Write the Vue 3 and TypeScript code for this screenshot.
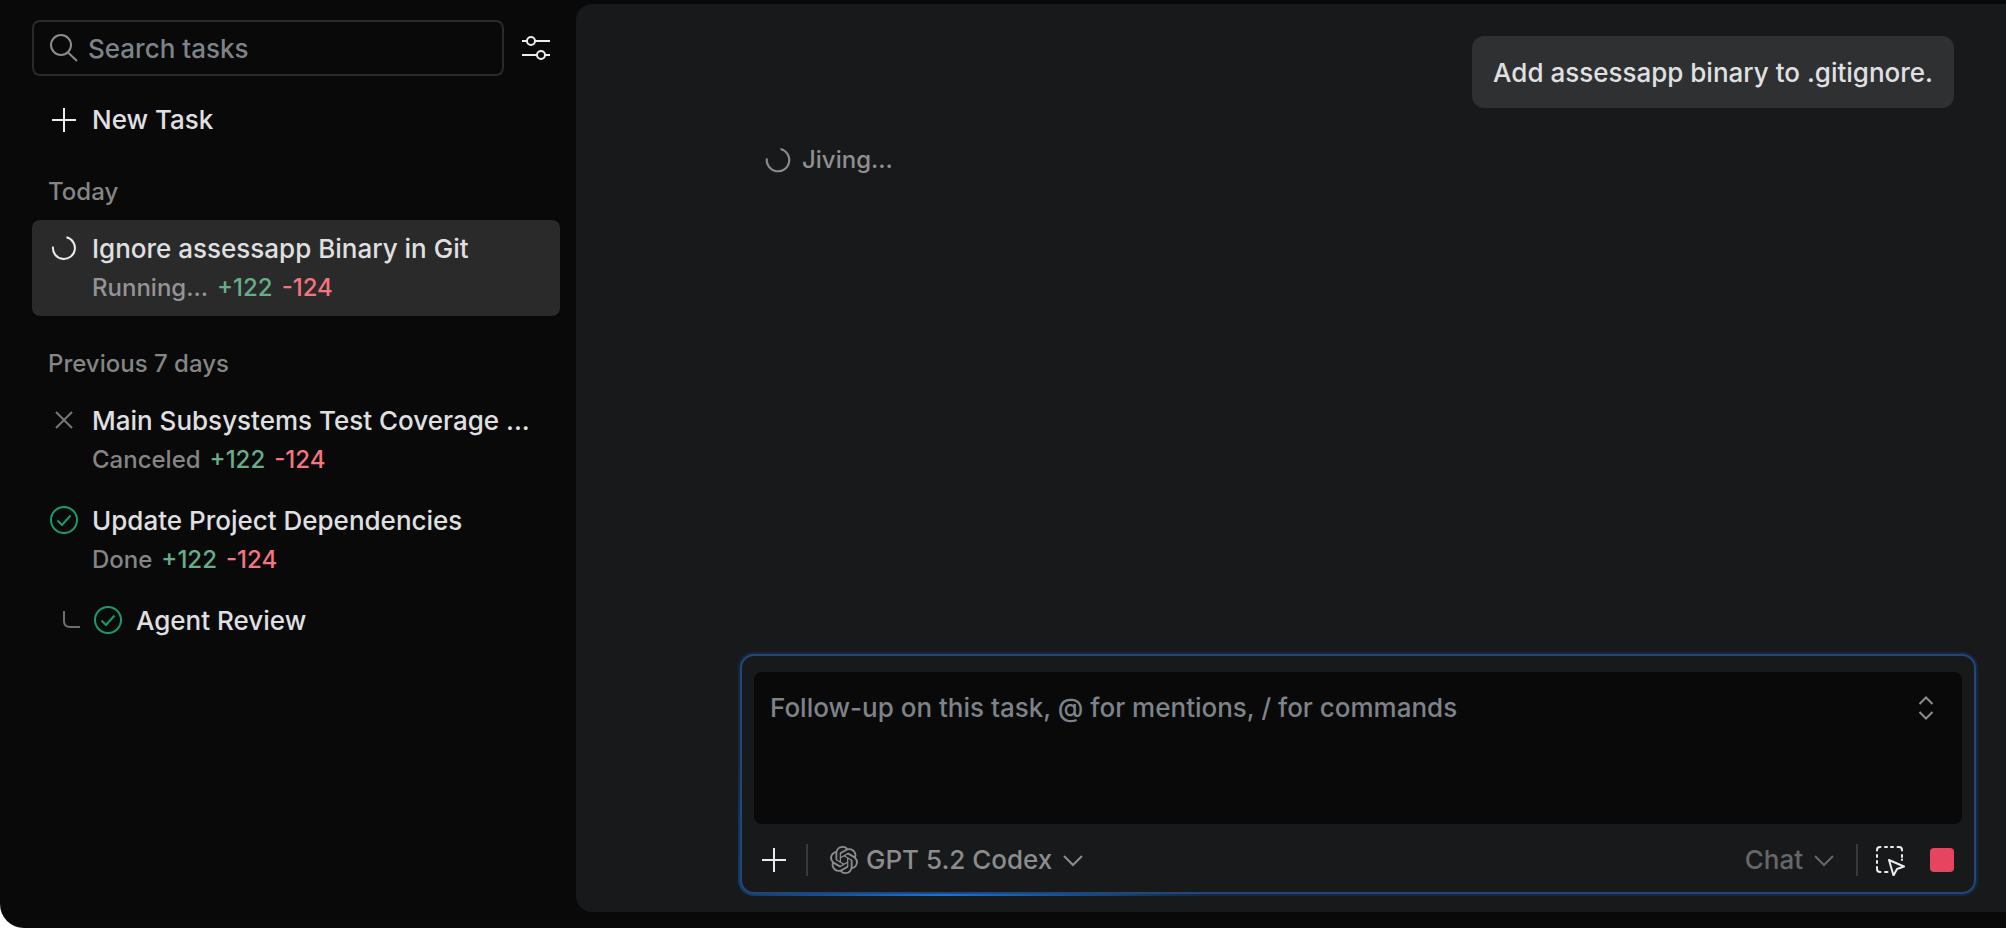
<script setup lang="ts">
import { ref } from 'vue'

type Status = 'running' | 'canceled' | 'done'

interface Task {
  id: number
  title: string
  status: Status
  label?: string
  added?: number
  removed?: number
  child?: boolean
}

interface Group {
  heading: string
  tasks: Task[]
}

const groups: Group[] = [
  {
    heading: 'Today',
    tasks: [
      { id: 1, title: 'Ignore assessapp Binary in Git', status: 'running', label: 'Running...', added: 122, removed: 124 },
    ],
  },
  {
    heading: 'Previous 7 days',
    tasks: [
      { id: 2, title: 'Main Subsystems Test Coverage ...', status: 'canceled', label: 'Canceled', added: 122, removed: 124 },
      { id: 3, title: 'Update Project Dependencies', status: 'done', label: 'Done', added: 122, removed: 124 },
      { id: 4, title: 'Agent Review', status: 'done', child: true },
    ],
  },
]

const selected = ref(1)
const query = ref('')
const draft = ref('')
const model = ref('GPT 5.2 Codex')
const mode = ref('Chat')
</script>

<template>
  <div class="window">
    <aside class="sidebar">
      <div class="search-row">
        <label class="search">
          <svg class="icon" viewBox="0 0 28 28" aria-hidden="true">
            <circle cx="11" cy="11" r="10" />
            <path d="M18 18.5 27 27" />
          </svg>
          <input v-model="query" type="text" placeholder="Search tasks" aria-label="Search tasks" />
        </label>
        <button class="icon-button" type="button" aria-label="Filter tasks">
          <svg class="icon bright" viewBox="0 0 28 28" aria-hidden="true">
            <path d="M0 7h5M13 7h15M0 21h15M23 21h5" />
            <circle cx="9" cy="7" r="4" />
            <circle cx="19" cy="21" r="4" />
          </svg>
        </button>
      </div>

      <button class="new-task" type="button">
        <svg class="icon bright" viewBox="0 0 28 28" aria-hidden="true">
          <path d="M14 2v24M2 14h24" />
        </svg>
        New Task
      </button>

      <section v-for="group in groups" :key="group.heading" class="group">
        <h2>{{ group.heading }}</h2>
        <ul>
          <li v-for="task in group.tasks" :key="task.id">
            <button
              class="task"
              :class="{ selected: selected === task.id, child: task.child }"
              type="button"
              @click="selected = task.id"
            >
              <svg v-if="task.child" class="branch" viewBox="0 0 18 28" aria-hidden="true">
                <path d="M2 5v10q0 6 6 6h10" />
              </svg>
              <svg v-if="task.status === 'running'" class="icon bright" viewBox="0 0 28 28" aria-hidden="true">
                <path d="M16.5 3.3A11 11 0 1 1 3 12.6" />
              </svg>
              <svg v-else-if="task.status === 'canceled'" class="icon dim" viewBox="0 0 28 28" aria-hidden="true">
                <path d="M6 6l16 16M22 6 6 22" />
              </svg>
              <svg v-else class="icon green" viewBox="0 0 28 28" aria-hidden="true">
                <circle cx="14" cy="14" r="13" />
                <path d="M7.5 14.5 12 19l8.500-9.500" />
              </svg>
              <span class="text">
                <span class="title">{{ task.title }}</span>
                <span v-if="task.label" class="meta">
                  <span>{{ task.label }}</span>
                  <span class="added">+{{ task.added }}</span>
                  <span class="removed">-{{ task.removed }}</span>
                </span>
              </span>
            </button>
          </li>
        </ul>
      </section>
    </aside>

    <main class="panel">
      <div class="thread">
        <p class="bubble">Add assessapp binary to .gitignore.</p>
        <p class="progress" role="status">
          <svg class="icon" viewBox="0 0 28 28" aria-hidden="true">
            <path d="M16.5 3A11.300 11.300 0 1 1 2.800 12.400" />
          </svg>
          Jiving...
        </p>
      </div>

      <form class="composer" @submit.prevent>
        <div class="composer-body">
          <div class="field">
            <textarea
              v-model="draft"
              placeholder="Follow-up on this task, @ for mentions, / for commands"
              aria-label="Follow-up"
            ></textarea>
            <button class="icon-button" type="button" aria-label="Expand editor">
              <svg class="icon" viewBox="0 0 28 28" aria-hidden="true">
                <path d="m7.500 10 6.500-6.500 6.500 6.500M7.500 18l6.500 6.500 6.500-6.500" />
              </svg>
            </button>
          </div>

          <div class="toolbar">
            <button class="icon-button" type="button" aria-label="Add context">
              <svg class="icon bright" viewBox="0 0 28 28" aria-hidden="true">
                <path d="M14 2v24M2 14h24" />
              </svg>
            </button>
            <span class="divider"></span>
            <label class="picker">
              <svg class="logo" viewBox="0 0 24 24" aria-hidden="true">
                <path d="M22.282 9.821a5.985 5.985 0 0 0-.516-4.910 6.046 6.046 0 0 0-6.510-2.900A6.065 6.065 0 0 0 4.981 4.182a5.985 5.985 0 0 0-3.998 2.900 6.046 6.046 0 0 0 .743 7.097 5.980 5.980 0 0 0 .511 4.911 6.051 6.051 0 0 0 6.515 2.900A5.985 5.985 0 0 0 13.260 24a6.056 6.056 0 0 0 5.772-4.206 5.990 5.990 0 0 0 3.998-2.900 6.056 6.056 0 0 0-.747-7.073zM13.260 22.430a4.476 4.476 0 0 1-2.876-1.041l.141-.081 4.779-2.758a.795.795 0 0 0 .393-.681v-6.737l2.020 1.169a.071.071 0 0 1 .038.052v5.583a4.504 4.504 0 0 1-4.495 4.494zM3.600 18.304a4.471 4.471 0 0 1-.535-3.014l.142.085 4.783 2.759a.771.771 0 0 0 .781 0l5.843-3.369v2.332a.080.080 0 0 1-.033.062L9.740 19.950a4.499 4.499 0 0 1-6.140-1.646zM2.341 7.896a4.485 4.485 0 0 1 2.365-1.973V11.600a.766.766 0 0 0 .388.676l5.815 3.355-2.020 1.168a.076.076 0 0 1-.071 0l-4.830-2.786A4.504 4.504 0 0 1 2.341 7.872zm16.596 3.855-5.833-3.387L15.119 7.200a.076.076 0 0 1 .071 0l4.830 2.791a4.494 4.494 0 0 1-.676 8.105v-5.678a.790.790 0 0 0-.407-.667zm2.011-3.023-.142-.085-4.774-2.782a.776.776 0 0 0-.785 0L9.409 9.230V6.897a.066.066 0 0 1 .028-.061l4.830-2.787a4.499 4.499 0 0 1 6.681 4.660zM8.307 12.863l-2.020-1.164a.080.080 0 0 1-.038-.057V6.075a4.499 4.499 0 0 1 7.376-3.454l-.142.081-4.779 2.758a.795.795 0 0 0-.393.681zm1.097-2.366 2.602-1.500 2.607 1.500v2.999l-2.597 1.500-2.607-1.500z" />
              </svg>
              <select v-model="model" aria-label="Model">
                <option>GPT 5.2 Codex</option>
                <option>GPT 5.2</option>
              </select>
              <svg class="chevron" viewBox="0 0 20 28" aria-hidden="true"><path d="m1 10 9 9 9-9" /></svg>
            </label>
            <label class="picker muted">
              <select v-model="mode" aria-label="Mode">
                <option>Chat</option>
                <option>Code</option>
              </select>
              <svg class="chevron" viewBox="0 0 20 28" aria-hidden="true"><path d="m1 10 9 9 9-9" /></svg>
            </label>
            <span class="divider"></span>
            <button class="icon-button pick" type="button" aria-label="Select element">
              <svg class="pick-icon" viewBox="0 0 32 32" aria-hidden="true">
                <path d="M3 6.500V6q0-3 3-3h.500M11 3h2M17 3h2M23.500 3H25q3 0 3 3v.500M28 11v2M3 11v2M3 17v2M3 23v2q0 3 3 3h.500M11 28h2.500M28 15.500v.500" />
                <path d="M15 16l15 6.500-7 2.500-3.500 6.500z" />
              </svg>
            </button>
            <button class="icon-button" type="button" aria-label="Stop">
              <span class="stop"></span>
            </button>
          </div>
        </div>
      </form>
    </main>
  </div>
</template>

<style>
body {
  margin: 0;
  background: #fff;
}
</style>

<style scoped>
* {
  box-sizing: border-box;
}

.window {
  display: grid;
  grid-template-columns: 576px minmax(0, 1fr);
  min-height: 100vh;
  overflow: hidden;
  background: #090909;
  border-bottom-left-radius: 24px;
  color: #e0e0e2;
  font: 500 26px/36px Inter, "Liberation Sans", sans-serif;
}

button,
input,
textarea,
select {
  margin: 0;
  padding: 0;
  border: 0;
  outline: 0;
  background: none;
  color: inherit;
  font: inherit;
}

button {
  cursor: pointer;
}

h2,
p,
ul {
  margin: 0;
  padding: 0;
  font: inherit;
  list-style: none;
}

.icon {
  flex: none;
  display: block;
  width: 28px;
  height: 28px;
  fill: none;
  stroke: #8c8c8c;
  stroke-width: 2;
}

.bright {
  stroke: #ececec;
}

.dim {
  stroke: #777;
}

.green {
  stroke: #199a6c;
}

.icon-button {
  flex: none;
  display: grid;
  place-items: center;
}

/* Sidebar */
.sidebar {
  padding: 20px 16px 20px 32px;
}

.search-row {
  display: flex;
  align-items: center;
  gap: 18px;
  padding-right: 10px;
}

.search {
  flex: 1;
  min-width: 0;
  display: flex;
  align-items: center;
  gap: 10px;
  height: 56px;
  padding: 0 16px;
  border: 2px solid #2a2a2a;
  border-radius: 8px;
}

.search input {
  flex: 1;
  min-width: 0;
  padding-top: 2px;
}

::placeholder {
  color: #7e838a;
  opacity: 1;
}

.new-task {
  display: flex;
  align-items: center;
  gap: 14px;
  width: 100%;
  height: 72px;
  margin-top: 8px;
  padding: 0 18px;
}

.group {
  margin-bottom: 12px;
}

.group h2 {
  height: 64px;
  padding: 20px 16px 0;
  color: #858585;
  font-size: 24px;
  line-height: 32px;
}

.group ul {
  display: grid;
  gap: 4px;
}

.task {
  display: flex;
  align-items: flex-start;
  gap: 14px;
  width: 100%;
  padding: 11px 18px 10px;
  border-radius: 8px;
  text-align: left;
}

.task.selected {
  background: #2a2a2a;
}

.task .icon {
  margin-top: 3px;
}

.task.child {
  padding-left: 30px;
}

.branch {
  flex: none;
  width: 18px;
  height: 28px;
  margin-top: 3px;
  fill: none;
  stroke: #6e6e6e;
  stroke-width: 2;
}

.text {
  display: grid;
  gap: 3px;
  min-width: 0;
}

.title {
  overflow: hidden;
  text-overflow: ellipsis;
  white-space: nowrap;
}

.meta {
  display: flex;
  gap: 9px;
  color: #858585;
  font-size: 24px;
}

.selected .meta {
  color: #949494;
}

.meta .added {
  color: #66ae8b;
}

.meta .removed {
  color: #f6747f;
}

/* Conversation */
.panel {
  display: flex;
  flex-direction: column;
  justify-content: space-between;
  margin: 4px 0 16px;
  padding: 32px 28px 16px 162px;
  border-radius: 16px 0 0 16px;
  background: #18191b;
}

.thread {
  display: grid;
  gap: 34px;
  padding: 0 24px 0 26px;
}

.bubble {
  justify-self: end;
  padding: 19px 21px 17px;
  border-radius: 12px;
  background: #2f3032;
}

.progress {
  display: flex;
  align-items: center;
  gap: 10px;
  color: #8e8f90;
  font-size: 24px;
}

/* Composer */
.composer {
  padding: 2px;
  border-radius: 16px;
  background: radial-gradient(ellipse 260px 220px at 204px 100%, #0a76f5, #14273f);
}

.composer-body {
  padding: 16px 12px 8px;
  border: 2px solid #234577;
  border-radius: 14px;
  background: #18191b;
}

.field {
  display: flex;
  align-items: flex-start;
  height: 152px;
  padding: 18px 22px 18px 16px;
  border-radius: 8px;
  background: #090909;
}

.field textarea {
  flex: 1;
  height: 100%;
  resize: none;
}

.field .icon-button {
  height: 36px;
}

.toolbar {
  display: flex;
  align-items: center;
  height: 48px;
  margin-top: 12px;
  padding: 0 8px 0 6px;
}

.divider {
  width: 2px;
  height: 32px;
  margin: 0 16px 0 18px;
  background: #37383a;
}

.picker {
  display: flex;
  align-items: center;
  gap: 8px;
  margin-left: 6px;
  color: #8c8c8d;
}

.picker select {
  appearance: none;
  height: 36px;
  field-sizing: content;
}

.picker.muted {
  margin-left: auto;
  margin-right: 4px;
  color: #666769;
}

.logo {
  width: 28px;
  height: 28px;
  fill: currentColor;
}

.chevron {
  width: 20px;
  height: 28px;
  margin-left: 3px;
  fill: none;
  stroke: currentColor;
  stroke-width: 2;
}

.pick {
  margin-right: 24px;
}

.pick-icon {
  width: 32px;
  height: 32px;
  fill: none;
  stroke: #ececec;
  stroke-width: 2;
  stroke-linecap: round;
  stroke-linejoin: round;
}

.stop {
  width: 24px;
  height: 24px;
  border-radius: 4px;
  background: #e5455f;
}
</style>
